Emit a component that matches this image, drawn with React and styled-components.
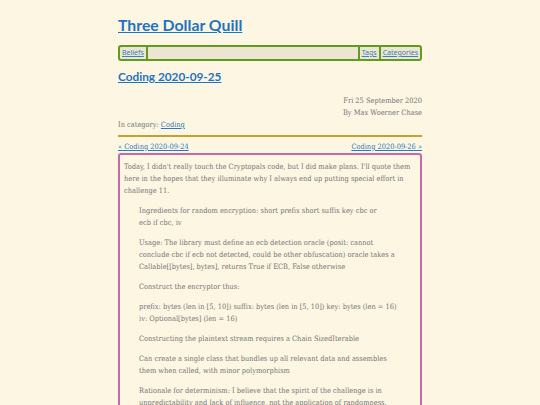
import React from "react";
import styled, { createGlobalStyle } from "styled-components";

const GlobalStyle = createGlobalStyle`
  html, body {
    margin: 0;
    padding: 0;
    background: #fdf6e3;
  }
  a {
    color: #2a78be;
  }
`;

const Page = styled.main`
  width: 304px;
  margin: 0 auto;
  padding-top: 14px;
`;

const SiteTitle = styled.h1`
  margin: 0 0 9px;
  font-family: Lato, sans-serif;
  font-size: 15.8px;
  font-weight: 700;
  line-height: 22px;
  a {
    color: #1f74c0;
  }
`;

const Nav = styled.nav`
  display: flex;
  align-items: center;
  height: 12px;
  border: 2px solid #5f9b1c;
  border-radius: 3px;
  background: #ebe5d1;
  font-family: "Noto Sans", sans-serif;
  font-size: 7px;
  line-height: 12px;
`;

const NavLink = styled.a`
  padding: 0 2px;
  border-right: ${(p) => (p.$left ? "2px solid #5f9b1c" : "none")};
  border-left: ${(p) => (p.$left ? "none" : "2px solid #5f9b1c")};
  color: #3d7fc0;
`;

const Spacer = styled.div`
  flex: 1;
`;

const PostTitle = styled.h2`
  margin: 8px 0 10px;
  font-family: Lato, sans-serif;
  font-size: 11.8px;
  font-weight: 700;
  line-height: 16px;
  a {
    color: #1f74c0;
  }
`;

const Serif = styled.div`
  font-family: "DejaVu Serif Condensed", "DejaVu Serif", serif;
  font-stretch: condensed;
  font-size: 7.4px;
  line-height: 12px;
  color: #747474;
`;

const Meta = styled(Serif)`
  text-align: right;
`;

const Rule = styled.hr`
  margin: 4px 0 4px;
  border: none;
  height: 2px;
  background: #c3a22b;
`;

const PrevNext = styled(Serif)`
  display: flex;
  justify-content: space-between;
`;

const Content = styled.article`
  margin-top: 0;
  padding: 6px 4px 20px;
  border: 2px solid #c46aa6;
  border-radius: 3px;
  font-family: "DejaVu Serif Condensed", "DejaVu Serif", serif;
  font-stretch: condensed;
  font-size: 7.4px;
  line-height: 12px;
  color: #747474;
  p {
    margin: 0 0 8px;
  }
`;

const Quote = styled.blockquote`
  margin: 0 16px 0 15px;
`;

const quoted = [
  <>
    Ingredients for random encryption: short prefix short suffix key cbc or
    <br />
    ecb if cbc, iv
  </>,
  "Usage: The library must define an ecb detection oracle (posit: cannot conclude cbc if ecb not detected, could be other obfuscation) oracle takes a Callable[[bytes], bytes], returns True if ECB, False otherwise",
  "Construct the encryptor thus:",
  "prefix: bytes (len in [5, 10]) suffix: bytes (len in [5, 10]) key: bytes (len = 16) iv: Optional[bytes] (len = 16)",
  "Constructing the plaintext stream requires a Chain SizedIterable",
  "Can create a single class that bundles up all relevant data and assembles them when called, with minor polymorphism",
  "Rationale for determinism: I believe that the spirit of the challenge is in unpredictability and lack of influence, not the application of randomness.",
];

export default function App() {
  return (
    <>
      <GlobalStyle />
      <Page>
        <SiteTitle>
          <a href="#">Three Dollar Quill</a>
        </SiteTitle>
        <Nav>
          <NavLink $left href="#">Beliefs</NavLink>
          <Spacer />
          <NavLink href="#">Tags</NavLink>
          <NavLink href="#">Categories</NavLink>
        </Nav>
        <PostTitle>
          <a href="#">Coding 2020-09-25</a>
        </PostTitle>
        <Meta>
          Fri 25 September 2020
          <br />
          By Max Woerner Chase
        </Meta>
        <Serif>
          In category: <a href="#">Coding</a>
        </Serif>
        <Rule />
        <PrevNext>
          <a href="#">« Coding 2020-09-24</a>
          <a href="#">Coding 2020-09-26 »</a>
        </PrevNext>
        <Content>
          <p>
            Today, I didn't really touch the Cryptopals code, but I did make plans. I'll quote
            them here in the hopes that they illuminate why I always end up putting special
            effort in challenge 11.
          </p>
          <Quote>
            {quoted.map((t, i) => (
              <p key={i}>{t}</p>
            ))}
          </Quote>
        </Content>
      </Page>
    </>
  );
}
